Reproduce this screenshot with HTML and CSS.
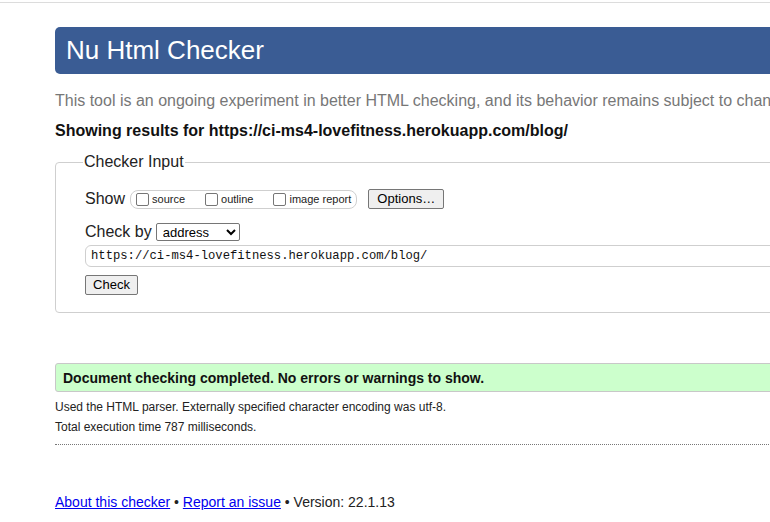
FILE: index.html
```html
<!DOCTYPE html>
<html lang="en">
<head>
<meta charset="utf-8">
<title>Nu Html Checker</title>
<link rel="stylesheet" href="styles.css">
</head>
<body>
<div class="topbar"></div>
<div class="page">
  <h1 class="title">Nu Html Checker</h1>
  <p class="intro">This tool is an ongoing experiment in better HTML checking, and its behavior remains subject to change</p>
  <p class="showing">Showing results for https://ci-ms4-lovefitness.herokuapp.com/blog/</p>
  <fieldset class="checker">
    <legend class="legend">Checker Input</legend>
    <div class="row show-row">
      <span class="row-label">Show</span>
      <span class="pill">
        <label class="opt"><input type="checkbox" class="cb"><span>source</span></label>
        <label class="opt"><input type="checkbox" class="cb"><span>outline</span></label>
        <label class="opt last"><input type="checkbox" class="cb"><span>image report</span></label>
      </span>
      <button class="btn options">Options…</button>
    </div>
    <div class="row by-row">
      <span class="row-label">Check by</span>
      <select class="sel"><option>address</option></select>
    </div>
    <div class="url">https://ci-ms4-lovefitness.herokuapp.com/blog/</div>
    <div class="row"><button class="btn check">Check</button></div>
  </fieldset>
  <div class="success">Document checking completed. No errors or warnings to show.</div>
  <p class="detail">Used the HTML parser. Externally specified character encoding was utf-8.</p>
  <p class="detail">Total execution time 787 milliseconds.</p>
  <div class="dots"></div>
  <p class="footer"><a href="#">About this checker</a> • <a href="#">Report an issue</a> • Version: 22.1.13</p>
</div>
</body>
</html>
```

FILE: styles.css
```css
html, body {
  overflow: hidden;
}
body {
  margin: 0;
  font-family: "Liberation Sans", Arial, sans-serif;
  color: #000;
  background: #fff;
}
.topbar {
  height: 2px;
  border-bottom: 1px solid #dcdcdc;
}
.page {
  width: 1000px;
  padding-left: 55px;
}
.title {
  margin: 24px 0 0;
  height: 47px;
  line-height: 47px;
  padding: 0 11px;
  background: #3a5c94;
  color: #fff;
  font-size: 26px;
  font-weight: normal;
  border-radius: 5px;
}
.intro {
  margin: 17px 0 0;
  font-size: 16px;
  line-height: 20px;
  color: #777;
  white-space: nowrap;
}
.showing {
  margin: 10px 0 0;
  font-size: 16px;
  line-height: 20px;
  font-weight: bold;
  color: #111;
}
.checker {
  margin: 11px 0 0;
  padding: 0 0 17px 29px;
  border: 1px solid #cfcfcf;
  border-radius: 4px;
  min-width: 0;
}
.legend {
  margin-left: -2px;
  padding: 0 1px;
  font-size: 16px;
  line-height: 20px;
  color: #222;
}
.row {
  display: flex;
  align-items: center;
}
.show-row {
  margin-top: 17px;
  height: 20px;
}
.row-label {
  font-size: 16px;
  line-height: 20px;
  color: #222;
}
.pill {
  display: inline-flex;
  align-items: center;
  margin-left: 5px;
  height: 17px;
  padding: 0 5px;
  border: 1px solid #cfcfcf;
  border-radius: 8px;
}
.opt {
  display: inline-flex;
  align-items: center;
  font-size: 11px;
  color: #222;
  margin-right: 20px;
}
.opt.last {
  margin-right: 0;
}
.cb {
  appearance: none;
  -webkit-appearance: none;
  width: 13px;
  height: 13px;
  margin: 0 3px 0 0;
  border: 1px solid #767676;
  border-radius: 2px;
  background: #fff;
}
.btn {
  font-family: "Liberation Sans", Arial, sans-serif;
  font-size: 13px;
  color: #000;
  background: #efefef;
  border: 1px solid #767676;
  border-radius: 2px;
  height: 20px;
  padding: 0 6px;
  line-height: 18px;
}
.options {
  margin-left: 11px;
  width: 76px;
}
.by-row {
  margin-top: 13px;
  height: 20px;
}
.sel {
  margin-left: 4px;
  width: 84px;
  height: 18px;
  font-family: "Liberation Sans", Arial, sans-serif;
  font-size: 13px;
  padding: 0 2px;
  border: 1px solid #767676;
  border-radius: 2px;
  background: #fff;
  color: #000;
}
.url {
  margin-top: 3px;
  width: 900px;
  height: 20px;
  line-height: 20px;
  border: 1px solid #cfcfcf;
  border-radius: 6px;
  padding-left: 5px;
  font-family: "Liberation Mono", "DejaVu Sans Mono", monospace;
  font-size: 12.2px;
  color: #111;
}
.check {
  margin-top: 8px;
  width: 53px;
}
.success {
  margin-top: 50px;
  height: 27px;
  line-height: 28px;
  padding-left: 7px;
  background: #ccffcc;
  border: 1px solid #c8c8c8;
  border-radius: 3px;
  font-size: 14px;
  font-weight: bold;
  color: #111;
}
.detail {
  margin: 0;
  font-size: 12px;
  line-height: 20px;
  color: #222;
}
.success + .detail {
  margin-top: 5px;
}
.dots {
  margin-top: 7px;
  border-top: 1px dotted #777;
}
.footer {
  margin: 47px 0 0;
  font-size: 14px;
  line-height: 20px;
  color: #222;
}
.footer a {
  color: #0000ee;
}
```
